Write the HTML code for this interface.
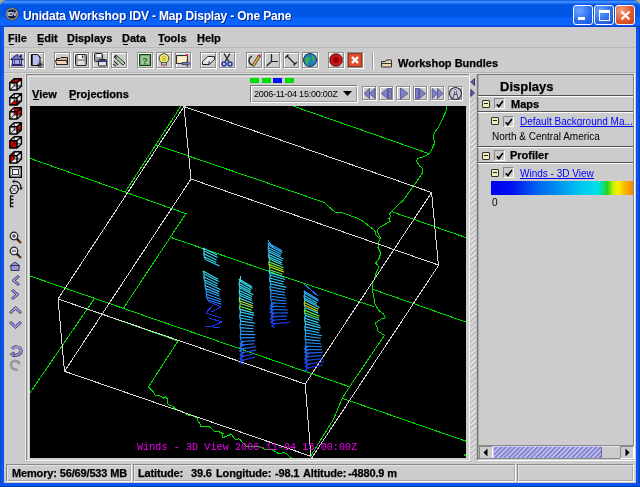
<!DOCTYPE html><html><head><meta charset="utf-8"><style>
*{margin:0;padding:0;box-sizing:content-box}
html,body{width:640px;height:487px;overflow:hidden;background:#b8a878;font-family:'Liberation Sans', sans-serif}
.a{position:absolute}
.t{position:absolute;white-space:nowrap;line-height:1;will-change:transform}
.tb{position:absolute;border:1px solid #8e8e8e;border-right-color:#fff;border-bottom-color:#fff;box-shadow:inset -1px -1px 0 #8e8e8e, inset 1px 1px 0 #fff}
svg{position:absolute;overflow:visible}
</style></head><body><div class="a" style="left:0;top:0;width:640px;height:27px;border-radius:6px 6px 0 0;background:linear-gradient(#0b4fde 0px,#2f7dff 1px,#4b95ff 2px,#2a78f6 3px,#1262ee 4px,#0056e6 5px,#0055e4 16px,#0a62f8 18px,#0c67ff 25px,#0b3fd0 26px,#0b3fd0 27px)"></div>
<div class="a" style="left:0;top:27px;width:4px;height:460px;background:linear-gradient(90deg,#0842c8,#0a5cf5 2px,#0a50e4 4px)"></div>
<div class="a" style="left:636px;top:27px;width:4px;height:460px;background:linear-gradient(90deg,#0a50e4,#0a5cf5 2px,#0030b8 4px)"></div>
<div class="a" style="left:0;top:483px;width:640px;height:4px;background:linear-gradient(#0a50e4,#0a5cf5 2px,#0030b8 4px)"></div>
<div class="a" style="left:4px;top:27px;width:632px;height:456px;background:#cccccc"></div>
<svg style="left:5px;top:7px" width="14" height="14" viewBox="0 0 14 14"><circle cx="7" cy="7" r="6.6" fill="#4a4a3a"/><circle cx="7" cy="7" r="5.8" fill="#b8b088"/><circle cx="7" cy="7" r="4.8" fill="#101c50"/>
<text x="7" y="9.2" font-family="Liberation Sans" font-size="5.5" font-weight="bold" fill="#fff" text-anchor="middle">IDV</text></svg>
<div class="t" style="left:24px;top:10px;font:bold 12px 'Liberation Sans', sans-serif;letter-spacing:-0.17px;color:#0a2a8e">Unidata Workshop IDV - Map Display - One Pane</div>
<div class="t" style="left:23px;top:9px;font:bold 12px 'Liberation Sans', sans-serif;letter-spacing:-0.17px;color:#fff">Unidata Workshop IDV - Map Display - One Pane</div>
<div class="a" style="left:573px;top:5px;width:18px;height:18px;border:1px solid #fff;border-radius:3px;background:radial-gradient(circle at 30% 25%,#6aa6ff,#2e6ff0 55%,#1a50d8)"><div class="a" style="left:4px;top:11px;width:7px;height:3px;background:#fff"></div></div>
<div class="a" style="left:594px;top:5px;width:18px;height:18px;border:1px solid #fff;border-radius:3px;background:radial-gradient(circle at 30% 25%,#6aa6ff,#2e6ff0 55%,#1a50d8)"><div class="a" style="left:4px;top:4px;width:9px;height:7px;border:1px solid #fff;border-top-width:3px"></div></div>
<div class="a" style="left:615px;top:5px;width:18px;height:18px;border:1px solid #fff;border-radius:3px;background:radial-gradient(circle at 30% 25%,#f4a080,#e2582c 55%,#c8401a)"><svg style="left:3.5px;top:4px" width="11" height="11"><path d="M1.5 1.5L9.5 9.5M9.5 1.5L1.5 9.5" stroke="#fff" stroke-width="2.2"/></svg></div>
<div class="t" style="left:8px;top:32.06px;font:bold 11px 'Liberation Sans', sans-serif;color:#000;-webkit-text-stroke:0.25px #000;">File</div>
<div class="a" style="left:9px;top:44px;width:5px;height:1px;background:#000"></div>
<div class="t" style="left:37px;top:32.06px;font:bold 11px 'Liberation Sans', sans-serif;color:#000;-webkit-text-stroke:0.25px #000;">Edit</div>
<div class="a" style="left:38px;top:44px;width:5px;height:1px;background:#000"></div>
<div class="t" style="left:67px;top:32.06px;font:bold 11px 'Liberation Sans', sans-serif;color:#000;-webkit-text-stroke:0.25px #000;">Displays</div>
<div class="a" style="left:68px;top:44px;width:5px;height:1px;background:#000"></div>
<div class="t" style="left:122px;top:32.06px;font:bold 11px 'Liberation Sans', sans-serif;color:#000;-webkit-text-stroke:0.25px #000;">Data</div>
<div class="a" style="left:123px;top:44px;width:5px;height:1px;background:#000"></div>
<div class="t" style="left:158px;top:32.06px;font:bold 11px 'Liberation Sans', sans-serif;color:#000;-webkit-text-stroke:0.25px #000;">Tools</div>
<div class="a" style="left:159px;top:44px;width:5px;height:1px;background:#000"></div>
<div class="t" style="left:197px;top:32.06px;font:bold 11px 'Liberation Sans', sans-serif;color:#000;-webkit-text-stroke:0.25px #000;">Help</div>
<div class="a" style="left:198px;top:44px;width:5px;height:1px;background:#000"></div>
<div class="a" style="left:4px;top:47px;width:632px;height:1px;background:#b8b8b8"></div>
<div class="tb" style="left:9px;top:52px;width:15px;height:15px"></div>
<div class="tb" style="left:28px;top:52px;width:15px;height:15px"></div>
<div class="tb" style="left:54px;top:52px;width:15px;height:15px"></div>
<div class="tb" style="left:73px;top:52px;width:15px;height:15px"></div>
<div class="tb" style="left:92px;top:52px;width:15px;height:15px"></div>
<div class="tb" style="left:111px;top:52px;width:15px;height:15px"></div>
<div class="tb" style="left:137px;top:52px;width:15px;height:15px"></div>
<div class="tb" style="left:156px;top:52px;width:15px;height:15px"></div>
<div class="tb" style="left:175px;top:52px;width:15px;height:15px"></div>
<div class="tb" style="left:200px;top:52px;width:15px;height:15px"></div>
<div class="tb" style="left:219px;top:52px;width:15px;height:15px"></div>
<div class="tb" style="left:246px;top:52px;width:15px;height:15px"></div>
<div class="tb" style="left:264px;top:52px;width:15px;height:15px"></div>
<div class="tb" style="left:283px;top:52px;width:15px;height:15px"></div>
<div class="tb" style="left:302px;top:52px;width:15px;height:15px"></div>
<div class="tb" style="left:328px;top:52px;width:15px;height:15px"></div>
<div class="tb" style="left:347px;top:52px;width:15px;height:15px"></div>
<svg style="left:9px;top:52px" width="16" height="16" viewBox="0 0 16 16"><path d="M1.5 7.5L8 2.5L14.5 7.5Z" fill="#7070b8" stroke="#2a2a70"/><rect x="11" y="2.5" width="2" height="3" fill="#2a2a70"/><rect x="3.5" y="7.5" width="9" height="5" fill="#a8a8e0" stroke="#2a2a70"/><path d="M5.5 8v4M10.5 8v4" stroke="#5050a0"/><path d="M2 13.5h12" stroke="#2a2a70" stroke-width="1.2"/></svg>
<svg style="left:28px;top:52px" width="16" height="16" viewBox="0 0 16 16"><path d="M3.5 2.5H9.5L12 5V13.5H3.5Z" fill="#b8c0f0" stroke="#111"/><path d="M4 3v10" stroke="#000" stroke-width="1.3"/><path d="M9.5 2.5L12.5 6" stroke="#111"/><path d="M10 10.5l4.5 4.5M14.5 10.5L10 15M12.2 9.5v6.5M9 12.7h6.5" stroke="#222" stroke-width=".8"/></svg>
<svg style="left:54px;top:52px" width="16" height="16" viewBox="0 0 16 16"><path d="M2.5 6.5H6L7 5.5H13.5V12.5H2.5Z" fill="#d8b890" stroke="#222"/><path d="M1.5 8.5H12.5L13.5 12.5H2.5Z" fill="#f0d8c0" stroke="#222"/></svg>
<svg style="left:73px;top:52px" width="16" height="16" viewBox="0 0 16 16"><rect x="2.5" y="2.5" width="11" height="11" rx="1" fill="#9a9a9a" stroke="#222"/><rect x="5" y="3" width="6" height="4" fill="#f0f0f0"/><rect x="9" y="3.5" width="1.3" height="2.5" fill="#222"/><rect x="4.5" y="9" width="7" height="4" fill="#e0e0e0"/></svg>
<svg style="left:92px;top:52px" width="16" height="16" viewBox="0 0 16 16"><rect x="2.5" y="1.5" width="8" height="8" rx="1" fill="#9a9a9a" stroke="#222"/><rect x="4.5" y="2" width="4.5" height="3" fill="#f0f0f0"/><rect x="6.5" y="7.5" width="8" height="6.5" rx="1" fill="#e0e0e0" stroke="#222"/><rect x="7" y="8" width="7" height="2" fill="#2a3a90"/></svg>
<svg style="left:111px;top:52px" width="16" height="16" viewBox="0 0 16 16"><path d="M5 3L14 11L12 13L3 5Z" fill="#a8d0a8" stroke="#333"/><path d="M3 9l4 4M2 12l3 2" stroke="#333" stroke-width="1.1"/><path d="M5 3l-2 2l3 1z" fill="#333"/></svg>
<svg style="left:137px;top:52px" width="16" height="16" viewBox="0 0 16 16"><rect x="2.5" y="2.5" width="11" height="11" fill="#70a870" stroke="#1a3a1a"/><rect x="4" y="4" width="8" height="8" fill="#98c898"/><text x="8" y="11.5" font-family="Liberation Sans" font-size="8.5" font-weight="bold" fill="#2a5a2a" text-anchor="middle">?</text></svg>
<svg style="left:156px;top:52px" width="16" height="16" viewBox="0 0 16 16"><circle cx="8" cy="6.5" r="4.8" fill="#f0e860" stroke="#444"/><path d="M7 4v5M9 4v5" stroke="#a09020" stroke-width=".7"/><rect x="5.5" y="10.5" width="5" height="2.5" fill="#c0c0c0" stroke="#444" stroke-width=".8"/><rect x="6.5" y="13" width="3" height="1.5" fill="#e07070"/></svg>
<svg style="left:175px;top:52px" width="16" height="16" viewBox="0 0 16 16"><rect x="1.5" y="3.5" width="11" height="8" fill="#f0e0b0" stroke="#333"/><rect x="3" y="5" width="8" height="5" fill="#fff0c8"/><path d="M7 10.5h5v-2l3 3l-3 3v-2h-5z" fill="#7080d0" stroke="#223" stroke-width=".7"/><rect x="11" y="2" width="2" height="2" fill="#e02020"/></svg>
<svg style="left:200px;top:52px" width="16" height="16" viewBox="0 0 16 16"><path d="M2.5 9.5L8 4.5H14.5L9 9.5Z" fill="#fff" stroke="#222"/><path d="M2.5 9.5V12.5H9L14.5 7.5V4.5M9 9.5V12.5" fill="#e0e0e0" stroke="#222"/></svg>
<svg style="left:219px;top:52px" width="16" height="16" viewBox="0 0 16 16"><path d="M5 1.5L10 10M11 1.5L6 10" stroke="#222" stroke-width="1.3"/><circle cx="5" cy="12" r="2" fill="none" stroke="#2a3ab0" stroke-width="1.6"/><circle cx="11" cy="12" r="2" fill="none" stroke="#2a3ab0" stroke-width="1.6"/></svg>
<svg style="left:246px;top:52px" width="16" height="16" viewBox="0 0 16 16"><path d="M6 13.5L12.5 3l2 1.2L8 14.5z" fill="#e8b030" stroke="#333" stroke-width=".8"/><path d="M12.5 3l2 1.2" stroke="#c03030" stroke-width="2"/><path d="M6 4c-4 2 -4 7 0 9" fill="none" stroke="#222" stroke-width="1.3"/></svg>
<svg style="left:264px;top:52px" width="16" height="16" viewBox="0 0 16 16"><path d="M7.5 2V9.5H14M7.5 9.5L2.5 14" fill="none" stroke="#222" stroke-width="1.2"/></svg>
<svg style="left:283px;top:52px" width="16" height="16" viewBox="0 0 16 16"><path d="M4 4L12 12M2 6L5.5 2.5M10.5 13.5L14 10" stroke="#222" stroke-width="1.2"/></svg>
<svg style="left:302px;top:52px" width="16" height="16" viewBox="0 0 16 16"><circle cx="8" cy="8" r="6.5" fill="#2080c0" stroke="#103050"/><path d="M3.5 6c2 -2 5 -1 4.5 1.5c-.5 2 -3 2 -2 5.5c-2 -1 -3.5 -4 -2.5 -7zM9.5 3.5c2.5 .5 4 3 3 6c-1.5 -1 -3 -3 -3 -6z" fill="#40b040"/></svg>
<svg style="left:328px;top:52px" width="16" height="16" viewBox="0 0 16 16"><path d="M5.5 2H10.5L14 5.5V10.5L10.5 14H5.5L2 10.5V5.5Z" fill="#c81818" stroke="#500"/><circle cx="8" cy="8" r="3" fill="#a00000"/></svg>
<svg style="left:347px;top:52px" width="16" height="16" viewBox="0 0 16 16"><rect x="1.5" y="1.5" width="13" height="13" fill="#e05030" stroke="#a03018"/><path d="M5 5L11 11M11 5L5 11" stroke="#fff" stroke-width="2.4"/></svg>
<div class="a" style="left:372px;top:53px;width:1px;height:17px;background:#999"></div>
<div class="a" style="left:373px;top:53px;width:1px;height:17px;background:#fff"></div>
<svg style="left:381px;top:59px" width="12" height="9" viewBox="0 0 12 9"><path d="M0.5 2.5h4l1 -1.5h5v7h-10z" fill="#e8d8a8" stroke="#333"/><path d="M0.5 4.5h10" stroke="#333"/></svg>
<div class="t" style="left:398px;top:56.66px;font:bold 11px 'Liberation Sans', sans-serif;color:#000;-webkit-text-stroke:0.25px #000;">Workshop Bundles</div>
<div class="a" style="left:4px;top:72px;width:632px;height:1px;background:#b4b4b4"></div>
<div class="a" style="left:4px;top:73px;width:632px;height:1px;background:#dcdcdc"></div>
<div class="a" style="left:25px;top:74px;width:1px;height:388px;background:#e8e8e8"></div>
<div class="a" style="left:26px;top:74px;width:1px;height:388px;background:#8a8a8a"></div>
<svg style="left:9px;top:78px" width="13" height="13" viewBox="0 0 13 13"><path d="M0.8 4.8L5.2 0.8L12.4 0.8L12.4 8L8 12L0.8 12Z" fill="#e8e8e8"/><path d="M0.8 12L8 4.8M5.2 8L12.4 0.8M0.8 4.8L12.4 8" stroke="#444" stroke-width=".6" opacity=".7"/><path d="M0.8 4.8L5.2 0.8L12.4 0.8L8 4.8Z" fill="#d00000"/><path d="M5.2 0.8V8H12.4M5.2 8L0.8 12" fill="none" stroke="#111" stroke-width=".8"/><path d="M0.8 4.8L5.2 0.8L12.4 0.8L12.4 8L8 12L0.8 12ZM0.8 4.8H8V12M8 4.8L12.4 0.8" fill="none" stroke="#000" stroke-width="1.4" stroke-linejoin="round"/></svg>
<svg style="left:9px;top:93px" width="13" height="13" viewBox="0 0 13 13"><path d="M0.8 4.8L5.2 0.8L12.4 0.8L12.4 8L8 12L0.8 12Z" fill="#e8e8e8"/><path d="M0.8 12L8 4.8M5.2 8L12.4 0.8M0.8 4.8L12.4 8" stroke="#444" stroke-width=".6" opacity=".7"/><path d="M0.8 12L5.2 8L12.4 8L8 12Z" fill="#d00000"/><path d="M5.2 0.8V8H12.4M5.2 8L0.8 12" fill="none" stroke="#111" stroke-width=".8"/><path d="M0.8 4.8L5.2 0.8L12.4 0.8L12.4 8L8 12L0.8 12ZM0.8 4.8H8V12M8 4.8L12.4 0.8" fill="none" stroke="#000" stroke-width="1.4" stroke-linejoin="round"/></svg>
<svg style="left:9px;top:107px" width="13" height="13" viewBox="0 0 13 13"><path d="M0.8 4.8L5.2 0.8L12.4 0.8L12.4 8L8 12L0.8 12Z" fill="#e8e8e8"/><path d="M0.8 12L8 4.8M5.2 8L12.4 0.8M0.8 4.8L12.4 8" stroke="#444" stroke-width=".6" opacity=".7"/><path d="M5.2 0.8L12.4 0.8L12.4 8L5.2 8Z" fill="#d00000"/><path d="M5.2 0.8V8H12.4M5.2 8L0.8 12" fill="none" stroke="#111" stroke-width=".8"/><path d="M0.8 4.8L5.2 0.8L12.4 0.8L12.4 8L8 12L0.8 12ZM0.8 4.8H8V12M8 4.8L12.4 0.8" fill="none" stroke="#000" stroke-width="1.4" stroke-linejoin="round"/></svg>
<svg style="left:9px;top:122px" width="13" height="13" viewBox="0 0 13 13"><path d="M0.8 4.8L5.2 0.8L12.4 0.8L12.4 8L8 12L0.8 12Z" fill="#e8e8e8"/><path d="M0.8 12L8 4.8M5.2 8L12.4 0.8M0.8 4.8L12.4 8" stroke="#444" stroke-width=".6" opacity=".7"/><path d="M8 4.8L12.4 0.8L12.4 8L8 12Z" fill="#d00000"/><path d="M5.2 0.8V8H12.4M5.2 8L0.8 12" fill="none" stroke="#111" stroke-width=".8"/><path d="M0.8 4.8L5.2 0.8L12.4 0.8L12.4 8L8 12L0.8 12ZM0.8 4.8H8V12M8 4.8L12.4 0.8" fill="none" stroke="#000" stroke-width="1.4" stroke-linejoin="round"/></svg>
<svg style="left:9px;top:136px" width="13" height="13" viewBox="0 0 13 13"><path d="M0.8 4.8L5.2 0.8L12.4 0.8L12.4 8L8 12L0.8 12Z" fill="#e8e8e8"/><path d="M0.8 12L8 4.8M5.2 8L12.4 0.8M0.8 4.8L12.4 8" stroke="#444" stroke-width=".6" opacity=".7"/><path d="M0.8 4.8L8 4.8L8 12L0.8 12Z" fill="#d00000"/><path d="M5.2 0.8V8H12.4M5.2 8L0.8 12" fill="none" stroke="#111" stroke-width=".8"/><path d="M0.8 4.8L5.2 0.8L12.4 0.8L12.4 8L8 12L0.8 12ZM0.8 4.8H8V12M8 4.8L12.4 0.8" fill="none" stroke="#000" stroke-width="1.4" stroke-linejoin="round"/></svg>
<svg style="left:9px;top:151px" width="13" height="13" viewBox="0 0 13 13"><path d="M0.8 4.8L5.2 0.8L12.4 0.8L12.4 8L8 12L0.8 12Z" fill="#e8e8e8"/><path d="M0.8 12L8 4.8M5.2 8L12.4 0.8M0.8 4.8L12.4 8" stroke="#444" stroke-width=".6" opacity=".7"/><path d="M0.8 4.8L5.2 0.8L5.2 8L0.8 12Z" fill="#d00000"/><path d="M5.2 0.8V8H12.4M5.2 8L0.8 12" fill="none" stroke="#111" stroke-width=".8"/><path d="M0.8 4.8L5.2 0.8L12.4 0.8L12.4 8L8 12L0.8 12ZM0.8 4.8H8V12M8 4.8L12.4 0.8" fill="none" stroke="#000" stroke-width="1.4" stroke-linejoin="round"/></svg>
<svg style="left:9px;top:166px" width="13" height="12" viewBox="0 0 13 12"><rect x="0.7" y="0.7" width="11.6" height="10.6" fill="#d8d8d8" stroke="#000" stroke-width="1.4"/><rect x="3.5" y="3.5" width="6" height="5" fill="#f4f4f4" stroke="#333"/><path d="M1 1l2.5 2.5M12 1l-2.5 2.5M1 11l2.5 -2.5M12 11l-2.5 -2.5" stroke="#333" stroke-width=".8"/></svg>
<svg style="left:9px;top:180px" width="14" height="14" viewBox="0 0 14 14"><path d="M1 9.5l2.5 -4h4.5l1.5 4l-2.5 4h-4.5z" fill="#e0e0e0" stroke="#111" stroke-width="1.2"/><path d="M3 8l4 3M7 7.5l-3.5 4" stroke="#444" stroke-width=".8"/><path d="M4.5 1.5c4 -1 7.5 2 7.5 6" fill="none" stroke="#111" stroke-width="1.2"/><path d="M10 7.5h4l-2 2.5z" fill="#111"/><path d="M5.5 0l-2 1.5l2 1.5" fill="none" stroke="#111"/></svg>
<svg style="left:9px;top:195px" width="6" height="13" viewBox="0 0 6 13"><path d="M1.5 0.5v11.5M1 1h3.5M1 4.5h3.5M1 8h3.5M1 11.5h3.5" stroke="#111" stroke-width="1.3" fill="none"/></svg>
<svg style="left:9px;top:231px" width="13" height="13" viewBox="0 0 13 13"><circle cx="5" cy="5" r="3.8" fill="#e0e0f0" stroke="#222" stroke-width="1.2"/><path d="M7.5 7.5l4.5 4.5" stroke="#5a3010" stroke-width="2.2"/><path d="M8 8l1.5 1.5" stroke="#222" stroke-width="2"/><path d="M3 5h4" stroke="#333"/><path d="M5 3v4" stroke="#333"/></svg>
<svg style="left:9px;top:246px" width="13" height="13" viewBox="0 0 13 13"><circle cx="5" cy="5" r="3.8" fill="#e0e0f0" stroke="#222" stroke-width="1.2"/><path d="M7.5 7.5l4.5 4.5" stroke="#5a3010" stroke-width="2.2"/><path d="M8 8l1.5 1.5" stroke="#222" stroke-width="2"/><path d="M3 5h4" stroke="#333"/></svg>
<svg style="left:9px;top:261px" width="12" height="10" viewBox="0 0 12 10"><path d="M1 5L6 1L11 5H10V9.5H2V5Z" fill="#9898d0" stroke="#333366"/><path d="M1 4.5h10M2 9.5h8" stroke="#333366"/></svg>
<svg style="left:11px;top:275px" width="9" height="11" viewBox="0 0 9 11"><path d="M7 0.5L1 5.5L7 10.5L8.5 9L4.2 5.5L8.5 2Z" fill="#a0a0e0" stroke="#333366" stroke-width=".9" stroke-linejoin="round"/></svg>
<svg style="left:11px;top:289px" width="9" height="11" viewBox="0 0 9 11"><path d="M2 0.5L8 5.5L2 10.5L0.5 9L4.8 5.5L0.5 2Z" fill="#a0a0e0" stroke="#333366" stroke-width=".9" stroke-linejoin="round"/></svg>
<svg style="left:9px;top:306px" width="13" height="8" viewBox="0 0 13 8"><path d="M0.5 6L6.5 0.5L12.5 6L11 7.5L6.5 3.5L2 7.5Z" fill="#a0a0e0" stroke="#333366" stroke-width=".9" stroke-linejoin="round"/></svg>
<svg style="left:9px;top:321px" width="13" height="8" viewBox="0 0 13 8"><path d="M0.5 2L6.5 7.5L12.5 2L11 0.5L6.5 4.5L2 0.5Z" fill="#a0a0e0" stroke="#333366" stroke-width=".9" stroke-linejoin="round"/></svg>
<svg style="left:9px;top:345px" width="13" height="13" viewBox="0 0 13 13"><path d="M3 4c2 -3 8 -3 9 1c1 4 -4 6 -7 5" fill="none" stroke="#333366" stroke-width="3"/><path d="M3 4c2 -3 8 -3 9 1c1 4 -4 6 -7 5" fill="none" stroke="#a0a0e0" stroke-width="1.6"/><path d="M1 9l4 -2v5z" fill="#a0a0e0" stroke="#333366" stroke-width=".8"/></svg>
<svg style="left:9px;top:359px" width="13" height="13" viewBox="0 0 13 13"><path d="M10 4c-2 -3 -8 -3 -8 1.5c0 4 4 6 7 5" fill="none" stroke="#999" stroke-width="2.6"/><path d="M9 1l3 3l-3 2z" fill="#999"/></svg>
<div class="a" style="left:26px;top:74px;width:444px;height:1px;background:#8a8a8a"></div>
<div class="a" style="left:28px;top:76px;width:1px;height:384px;background:#e8e8e8"></div>
<div class="a" style="left:28px;top:76px;width:441px;height:1px;background:#e8e8e8"></div>
<div class="a" style="left:469px;top:74px;width:1px;height:387px;background:#f4f4f4"></div>
<div class="a" style="left:26px;top:460px;width:444px;height:1px;background:#f4f4f4"></div>
<div class="t" style="left:32px;top:87.76px;font:bold 11px 'Liberation Sans', sans-serif;color:#000;-webkit-text-stroke:0.25px #000;">View</div>
<div class="a" style="left:33px;top:99px;width:6px;height:1px;background:#000"></div>
<div class="t" style="left:69px;top:87.76px;font:bold 11px 'Liberation Sans', sans-serif;color:#000;-webkit-text-stroke:0.25px #000;">Projections</div>
<div class="a" style="left:70px;top:99px;width:6px;height:1px;background:#000"></div>
<div class="a" style="left:250px;top:78px;width:9px;height:5px;background:#00e000"></div>
<div class="a" style="left:262px;top:78px;width:9px;height:5px;background:#00e000"></div>
<div class="a" style="left:273px;top:78px;width:9px;height:5px;background:#0010ff"></div>
<div class="a" style="left:285px;top:78px;width:9px;height:5px;background:#00e000"></div>
<div class="a" style="left:250px;top:85px;width:106px;height:16px;border:1px solid #777;border-right-color:#fff;border-bottom-color:#fff;box-shadow:inset 1px 1px 0 #fff, inset -1px -1px 0 #999"></div>
<div class="t" style="left:254px;top:88.5px;font:9px 'Liberation Sans', sans-serif;letter-spacing:-0.25px;color:#000">2006-11-04 15:00:00Z</div>
<svg style="left:343px;top:91px" width="10" height="6" viewBox="0 0 10 6"><path d="M0 0h9l-4.5 5z" fill="#000"/></svg>
<div class="tb" style="left:362px;top:86px;width:13px;height:13px"></div>
<div class="tb" style="left:379px;top:86px;width:13px;height:13px"></div>
<div class="tb" style="left:396px;top:86px;width:13px;height:13px"></div>
<div class="tb" style="left:413px;top:86px;width:13px;height:13px"></div>
<div class="tb" style="left:430px;top:86px;width:13px;height:13px"></div>
<div class="tb" style="left:448px;top:86px;width:13px;height:13px"></div>
<svg style="left:362px;top:86px" width="15" height="15" viewBox="0 0 15 15"><path d="M7.5 2.5L2 7.5L7.5 12.5Z" fill="#8080c8" stroke="#4a4a88" stroke-width=".8" stroke-linejoin="round"/><path d="M13 2.5L7.5 7.5L13 12.5Z" fill="#8080c8" stroke="#4a4a88" stroke-width=".8" stroke-linejoin="round"/></svg>
<svg style="left:379px;top:86px" width="15" height="15" viewBox="0 0 15 15"><path d="M8.5 2.5L2.5 7.5L8.5 12.5Z" fill="#8080c8" stroke="#4a4a88" stroke-width=".8" stroke-linejoin="round"/><rect x="9.5" y="2.5" width="3" height="10" fill="#8080c8" stroke="#4a4a88" stroke-width=".8" stroke-linejoin="round"/></svg>
<svg style="left:396px;top:86px" width="15" height="15" viewBox="0 0 15 15"><path d="M4.5 2L12 7.5L4.5 13Z" fill="#8080c8" stroke="#4a4a88" stroke-width=".8" stroke-linejoin="round"/></svg>
<svg style="left:413px;top:86px" width="15" height="15" viewBox="0 0 15 15"><rect x="2.5" y="2.5" width="3" height="10" fill="#8080c8" stroke="#4a4a88" stroke-width=".8" stroke-linejoin="round"/><path d="M6.5 2.5L12.5 7.5L6.5 12.5Z" fill="#8080c8" stroke="#4a4a88" stroke-width=".8" stroke-linejoin="round"/></svg>
<svg style="left:430px;top:86px" width="15" height="15" viewBox="0 0 15 15"><path d="M2 2.5L7.5 7.5L2 12.5Z" fill="#8080c8" stroke="#4a4a88" stroke-width=".8" stroke-linejoin="round"/><path d="M7.5 2.5L13 7.5L7.5 12.5Z" fill="#8080c8" stroke="#4a4a88" stroke-width=".8" stroke-linejoin="round"/></svg>
<svg style="left:448px;top:86px" width="15" height="15" viewBox="0 0 15 15"><circle cx="7.5" cy="7.5" r="6" fill="#c8c8e0" stroke="#333" stroke-width="1.2"/><path d="M7.5 3.5L5 12M7.5 3.5L10 12M6 8.5h3" stroke="#555" stroke-width="1" fill="none"/><circle cx="7.5" cy="5" r="1.2" fill="#fff" stroke="#555" stroke-width=".6"/></svg>
<div class="a" style="left:30px;top:106px;width:436px;height:352px;background:#000"></div>
<div class="a" style="left:476px;top:74px;width:1px;height:388px;background:#bbb"></div>
<svg style="left:470px;top:78px" width="6" height="8" viewBox="0 0 6 8"><path d="M4.5 0.5L0.8 4L4.5 7.5Z" fill="#6060b0" stroke="#202050" stroke-width=".8"/></svg>
<svg style="left:470px;top:89px" width="6" height="8" viewBox="0 0 6 8"><path d="M0.8 0.5L4.5 4L0.8 7.5Z" fill="#6060b0" stroke="#202050" stroke-width=".8"/></svg>
<div class="a" style="left:471px;top:99px;width:5px;height:358px;background:repeating-linear-gradient(135deg,#e6e6e6 0px,#e6e6e6 1px,#b8b8b8 1.6px,#b8b8b8 2.2px,#cccccc 2.6px,#cccccc 3.6px)"></div>
<div class="a" style="left:477px;top:74px;width:1px;height:386px;background:#777"></div>
<div class="a" style="left:478px;top:75px;width:1px;height:385px;background:#aaa"></div>
<div class="a" style="left:477px;top:74px;width:157px;height:1px;background:#777"></div>
<div class="a" style="left:633px;top:74px;width:1px;height:386px;background:#888"></div>
<div class="a" style="left:634px;top:74px;width:1px;height:387px;background:#fff"></div>
<div class="a" style="left:477px;top:460px;width:158px;height:1px;background:#fff"></div>
<div class="t" style="left:500px;top:79.11px;font:bold 13px 'Liberation Sans', sans-serif;color:#000;-webkit-text-stroke:0.25px #000;">Displays</div>
<div class="a" style="left:478px;top:95px;width:155px;height:1px;background:#555"></div>
<div class="a" style="left:478px;top:96px;width:155px;height:1px;background:#fff"></div>
<div class="a" style="left:482px;top:100px;width:6px;height:6px;border:1px solid #333;border-radius:1px;background:#f0ecb8"></div>
<div class="a" style="left:484px;top:103px;width:4px;height:1px;background:#222"></div>
<div class="a" style="left:494px;top:98px;width:9px;height:9px;border:1px solid #888;border-right-color:#fff;border-bottom-color:#fff;background:#cccccc"></div>
<svg style="left:496px;top:100px" width="8" height="8" viewBox="0 0 8 8"><path d="M0.8 4.2L2.8 6.6L7 1" fill="none" stroke="#000" stroke-width="1.6"/></svg>
<div class="t" style="left:510.5px;top:98.46px;font:bold 11px 'Liberation Sans', sans-serif;color:#000;-webkit-text-stroke:0.25px #000;">Maps</div>
<div class="a" style="left:478px;top:111px;width:155px;height:1px;background:#555"></div>
<div class="a" style="left:478px;top:112px;width:155px;height:1px;background:#fff"></div>
<div class="a" style="left:491px;top:117px;width:6px;height:6px;border:1px solid #333;border-radius:1px;background:#f0ecb8"></div>
<div class="a" style="left:493px;top:120px;width:4px;height:1px;background:#222"></div>
<div class="a" style="left:503px;top:116px;width:9px;height:9px;border:1px solid #888;border-right-color:#fff;border-bottom-color:#fff;background:#cccccc"></div>
<svg style="left:505px;top:118px" width="8" height="8" viewBox="0 0 8 8"><path d="M0.8 4.2L2.8 6.6L7 1" fill="none" stroke="#000" stroke-width="1.6"/></svg>
<div class="t" style="left:520px;top:116.44px;font:10px 'Liberation Sans', sans-serif;color:#0000ff;">Default Background Ma...</div>
<div class="a" style="left:520px;top:126px;width:113px;height:1px;background:#0000ff"></div>
<div class="t" style="left:492px;top:131.24px;font:10px 'Liberation Sans', sans-serif;color:#000;">North &amp; Central America</div>
<div class="a" style="left:478px;top:146px;width:155px;height:1px;background:#555"></div>
<div class="a" style="left:478px;top:147px;width:155px;height:1px;background:#fff"></div>
<div class="a" style="left:482px;top:152px;width:6px;height:6px;border:1px solid #333;border-radius:1px;background:#f0ecb8"></div>
<div class="a" style="left:484px;top:155px;width:4px;height:1px;background:#222"></div>
<div class="a" style="left:494px;top:150px;width:9px;height:9px;border:1px solid #888;border-right-color:#fff;border-bottom-color:#fff;background:#cccccc"></div>
<svg style="left:496px;top:152px" width="8" height="8" viewBox="0 0 8 8"><path d="M0.8 4.2L2.8 6.6L7 1" fill="none" stroke="#000" stroke-width="1.6"/></svg>
<div class="t" style="left:510.2px;top:149.26px;font:bold 11px 'Liberation Sans', sans-serif;color:#000;-webkit-text-stroke:0.25px #000;">Profiler</div>
<div class="a" style="left:478px;top:162px;width:155px;height:1px;background:#555"></div>
<div class="a" style="left:478px;top:163px;width:155px;height:1px;background:#fff"></div>
<div class="a" style="left:491px;top:169px;width:6px;height:6px;border:1px solid #333;border-radius:1px;background:#f0ecb8"></div>
<div class="a" style="left:493px;top:172px;width:4px;height:1px;background:#222"></div>
<div class="a" style="left:503px;top:167px;width:9px;height:9px;border:1px solid #888;border-right-color:#fff;border-bottom-color:#fff;background:#cccccc"></div>
<svg style="left:505px;top:169px" width="8" height="8" viewBox="0 0 8 8"><path d="M0.8 4.2L2.8 6.6L7 1" fill="none" stroke="#000" stroke-width="1.6"/></svg>
<div class="t" style="left:520px;top:167.74px;font:10px 'Liberation Sans', sans-serif;color:#0000ff;">Winds - 3D View</div>
<div class="a" style="left:520px;top:177.5px;width:74px;height:1px;background:#0000ff"></div>
<div class="a" style="left:491px;top:181px;width:142px;height:14px;background:linear-gradient(90deg,#0000f0 0px,#0010f0 20px,#0060f0 45px,#0098f0 70px,#00c8f0 90px,#00e0e8 106px,#10e080 113px,#20d020 116px,#c0f000 122px,#f8f000 127px,#f8c000 133px,#f89000 140px)"></div>
<div class="t" style="left:491.5px;top:196.74px;font:10px 'Liberation Sans', sans-serif;color:#000;">0</div>
<div class="a" style="left:479px;top:446px;width:12px;height:11px;border:1px solid #888;border-right-color:#fff;border-bottom-color:#fff;background:#ccc"></div>
<svg style="left:483px;top:448px" width="5" height="9" viewBox="0 0 5 9"><path d="M4.5 0.5L0.5 4.5L4.5 8.5Z" fill="#000"/></svg>
<div class="a" style="left:493px;top:446px;width:107px;height:11px;border:1px solid #6868a8;border-top-color:#c8c8f8;border-left-color:#c8c8f8;background:repeating-linear-gradient(135deg,#c0c0f4 0px,#c0c0f4 1px,#8080c8 1.5px,#8080c8 2.2px,#9c9cdc 2.6px,#9c9cdc 3.2px)"></div>
<div class="a" style="left:478px;top:445px;width:155px;height:1px;background:#8a8a8a"></div>
<div class="a" style="left:478px;top:458px;width:155px;height:1px;background:#8a8a8a"></div>
<div class="a" style="left:601px;top:446px;width:19px;height:1px;background:#e8e8e8"></div>
<div class="a" style="left:620px;top:446px;width:12px;height:11px;border:1px solid #888;border-right-color:#fff;border-bottom-color:#fff;background:#ccc"></div>
<svg style="left:625px;top:448px" width="5" height="9" viewBox="0 0 5 9"><path d="M0.5 0.5L4.5 4.5L0.5 8.5Z" fill="#000"/></svg>
<div class="a" style="left:6px;top:464px;width:124px;height:16px;border:1px solid #8a8a8a;border-right-color:#fff;border-bottom-color:#fff;box-shadow:inset 1px 1px 0 #e4e4e4, inset -1px -1px 0 #a8a8a8"></div>
<div class="a" style="left:133px;top:464px;width:381px;height:16px;border:1px solid #8a8a8a;border-right-color:#fff;border-bottom-color:#fff;box-shadow:inset 1px 1px 0 #e4e4e4, inset -1px -1px 0 #a8a8a8"></div>
<div class="a" style="left:517px;top:464px;width:115px;height:16px;border:1px solid #8a8a8a;border-right-color:#fff;border-bottom-color:#fff;box-shadow:inset 1px 1px 0 #e4e4e4, inset -1px -1px 0 #a8a8a8"></div>
<div class="t" style="left:12px;top:467.06px;font:bold 11px 'Liberation Sans', sans-serif;color:#000;-webkit-text-stroke:0.25px #000;letter-spacing:-0.15px">Memory: 56/69/533 MB</div>
<div class="t" style="left:138px;top:467.06px;font:bold 11px 'Liberation Sans', sans-serif;color:#000;-webkit-text-stroke:0.25px #000;letter-spacing:-0.15px">Latitude:</div>
<div class="t" style="left:191px;top:467.06px;font:bold 11px 'Liberation Sans', sans-serif;color:#000;-webkit-text-stroke:0.25px #000;letter-spacing:-0.15px">39.6</div>
<div class="t" style="left:215.5px;top:467.06px;font:bold 11px 'Liberation Sans', sans-serif;color:#000;-webkit-text-stroke:0.25px #000;letter-spacing:-0.15px">Longitude:</div>
<div class="t" style="left:274.5px;top:467.06px;font:bold 11px 'Liberation Sans', sans-serif;color:#000;-webkit-text-stroke:0.25px #000;letter-spacing:-0.15px">-98.1</div>
<div class="t" style="left:302.5px;top:467.06px;font:bold 11px 'Liberation Sans', sans-serif;color:#000;-webkit-text-stroke:0.25px #000;letter-spacing:-0.15px">Altitude:</div>
<div class="t" style="left:347.5px;top:467.06px;font:bold 11px 'Liberation Sans', sans-serif;color:#000;-webkit-text-stroke:0.25px #000;letter-spacing:-0.15px">-4880.9 m</div>
<svg style="left:0;top:0" width="640" height="487"><defs><clipPath id="cv"><rect x="30" y="106" width="436" height="352"/></clipPath></defs><g clip-path="url(#cv)" stroke-linecap="round" shape-rendering="crispEdges"><polyline points="293.0,106.0 429.5,153.8" fill="none" stroke="#00dc00" stroke-width="1"/><polyline points="30.0,158.4 185.9,213.6 123.5,308.2" fill="none" stroke="#00dc00" stroke-width="1"/><polyline points="181.0,106.0 125.5,191.5" fill="none" stroke="#00dc00" stroke-width="1"/><polyline points="155.8,144.8 324.2,202.4 335.5,212.6 342.3,212.6 360.3,219.4 374.8,230.4 375.6,234.5 379.7,238.6" fill="none" stroke="#00dc00" stroke-width="1"/><polyline points="30.0,276.0 349.6,386.8" fill="none" stroke="#00dc00" stroke-width="1"/><polyline points="94.4,298.5 30.0,392.8" fill="none" stroke="#00dc00" stroke-width="1"/><polyline points="170.2,237.2 293.7,280.0 373.9,306.6" fill="none" stroke="#00dc00" stroke-width="1"/><polyline points="85.0,308.3 178.0,341.0 148.5,386.9 153.8,392.5 155.0,395.2 158.8,395.2 163.8,398.1 165.6,396.9 168.1,400.0 166.9,403.1 169.4,405.6 173.1,406.2 175.0,408.8 181.2,411.2 185.0,413.1 187.5,415.0 191.9,415.6 197.5,418.1 197.5,420.6 200.0,423.8 200.6,426.9 205.0,426.9 208.1,426.2 211.2,428.1 214.4,431.2 219.4,431.9 223.1,433.8 221.9,436.9 223.1,438.1 225.6,436.2 228.8,435.6 230.6,433.8 232.5,435.6 234.4,438.8 236.2,439.4 238.8,438.8 240.6,440.0 243.1,443.1 246.2,446.2 258.8,446.2 261.9,448.1 264.4,449.4 271.2,449.4 273.8,450.6 277.5,453.1 281.2,453.1 283.8,452.5 287.5,454.4 290.0,456.9 291.9,457.5" fill="none" stroke="#00dc00" stroke-width="1"/><polyline points="446.4,106.0 446.0,111.3 438.8,126.7 435.7,130.8 433.2,135.9 434.7,143.1 429.5,153.8 424.4,156.5 417.2,158.5 416.8,161.6 419.3,165.7 423.0,168.8 422.4,172.9 416.2,182.1 403.5,200.0 391.2,211.5 389.6,214.0 390.4,216.4 388.7,218.9 390.4,221.3 381.3,226.3 378.0,228.7 377.7,232.0 380.5,237.8 378.9,241.0 378.0,247.6 380.5,252.5 379.7,257.5 375.6,263.2 378.0,265.7 378.9,267.3 376.4,272.2 374.0,280.0 372.0,284.5 372.0,289.0 373.7,296.4 375.1,304.6 379.2,310.8 383.3,313.9 385.4,318.0 381.3,319.0 375.1,323.1 377.2,327.2 378.2,331.3 384.4,335.4 349.6,386.8 342.2,398.3 333.1,420.0 310.0,457.2" fill="none" stroke="#00dc00" stroke-width="1"/><polyline points="342.2,398.3 466.0,441.2" fill="none" stroke="#00dc00" stroke-width="1"/><polyline points="391.6,211.6 466.0,237.6" fill="none" stroke="#00dc00" stroke-width="1"/><polyline points="372.0,289.0 466.0,322.1" fill="none" stroke="#00dc00" stroke-width="1"/><polyline points="184.0,106.5 191.0,179.0" fill="none" stroke="#d8d8d8" stroke-width="1"/><polyline points="184.0,106.5 58.0,299.0" fill="none" stroke="#d8d8d8" stroke-width="1"/><polyline points="184.0,106.5 431.6,192.5" fill="none" stroke="#d8d8d8" stroke-width="1"/><polyline points="191.0,179.0 64.5,371.3" fill="none" stroke="#d8d8d8" stroke-width="1"/><polyline points="191.0,179.0 438.4,265.0" fill="none" stroke="#d8d8d8" stroke-width="1"/><polyline points="58.0,299.0 64.5,371.3" fill="none" stroke="#d8d8d8" stroke-width="1"/><polyline points="58.0,299.0 305.2,384.0" fill="none" stroke="#d8d8d8" stroke-width="1"/><polyline points="64.5,371.3 310.9,456.3" fill="none" stroke="#d8d8d8" stroke-width="1"/><polyline points="431.6,192.5 438.4,265.0" fill="none" stroke="#d8d8d8" stroke-width="1"/><polyline points="431.6,192.5 305.2,384.0" fill="none" stroke="#d8d8d8" stroke-width="1"/><polyline points="305.2,384.0 310.9,456.3" fill="none" stroke="#d8d8d8" stroke-width="1"/><polyline points="438.8,265.0 312.0,457.5" fill="none" stroke="#d8d8d8" stroke-width="1"/><polyline points="268.5,241.0 273.0,248.0" fill="none" stroke="#30a8ff" stroke-width="1"/><polyline points="240.5,277.0 241.0,282.0" fill="none" stroke="#38e0f8" stroke-width="1"/><polyline points="304.0,284.0 318.0,296.0" fill="none" stroke="#2080f8" stroke-width="1"/><polyline points="208.0,301.0 221.0,307.0 211.0,312.0" fill="none" stroke="#2038f0" stroke-width="1"/><polyline points="213.0,305.0 206.0,313.0 221.0,318.0" fill="none" stroke="#2038f0" stroke-width="1"/><polyline points="209.0,318.0 222.0,322.0 210.0,327.0" fill="none" stroke="#2038f0" stroke-width="1"/><polyline points="205.0,326.0 220.0,328.0" fill="none" stroke="#2038f0" stroke-width="1"/><rect x="464" y="454" width="2" height="2" fill="#00c800"/></g><g stroke-width="1.15" fill="none"><path d="M203.0 248.0l14.0 7.0" stroke="#38e0f8"/><path d="M204.2 250.9l13.4 6.6" stroke="#38e0f8"/><path d="M203.0 248.0L204.2 250.9" stroke="#38e0f8"/><path d="M203.8 253.8l12.8 6.1" stroke="#38e0f8"/><path d="M204.2 250.9L203.8 253.8" stroke="#38e0f8"/><path d="M204.2 256.7l12.2 5.7" stroke="#38e0f8"/><path d="M203.8 253.8L204.2 256.7" stroke="#38e0f8"/><path d="M205.5 259.6l14.0 6.4" stroke="#38e0f8"/><path d="M204.2 256.7L205.5 259.6" stroke="#38e0f8"/><path d="M203.0 271.0l15.0 8.2" stroke="#38e0f8"/><path d="M204.2 273.9l14.4 7.6" stroke="#38d9f8"/><path d="M203.0 271.0L204.2 273.9" stroke="#38d9f8"/><path d="M203.8 276.8l13.8 6.9" stroke="#38d2f8"/><path d="M204.2 273.9L203.8 276.8" stroke="#38d2f8"/><path d="M204.2 279.7l13.2 6.3" stroke="#38ccf8"/><path d="M203.8 276.8L204.2 279.7" stroke="#38ccf8"/><path d="M205.4 282.6l15.0 6.8" stroke="#38c5f8"/><path d="M204.2 279.7L205.4 282.6" stroke="#38c5f8"/><path d="M205.0 285.5l14.4 6.1" stroke="#37bdf8"/><path d="M205.4 282.6L205.0 285.5" stroke="#37bdf8"/><path d="M205.4 288.4l13.8 5.5" stroke="#32b1f8"/><path d="M205.0 285.5L205.4 288.4" stroke="#32b1f8"/><path d="M206.6 291.3l13.2 5.0" stroke="#2da5f8"/><path d="M205.4 288.4L206.6 291.3" stroke="#2da5f8"/><path d="M206.2 294.2l15.0 5.3" stroke="#2998f8"/><path d="M206.6 291.3L206.2 294.2" stroke="#2998f8"/><path d="M206.6 297.1l14.4 4.7" stroke="#248cf8"/><path d="M206.2 294.2L206.6 297.1" stroke="#248cf8"/><path d="M207.8 300.0l13.8 4.1" stroke="#2080f8"/><path d="M206.6 297.1L207.8 300.0" stroke="#2080f8"/><path d="M239.0 279.0l13.0 7.8" stroke="#38e0f8"/><path d="M239.9 281.2l12.5 7.2" stroke="#38e0f8"/><path d="M239.0 279.0L239.9 281.2" stroke="#38e0f8"/><path d="M239.1 283.5l12.0 6.6" stroke="#38e0f8"/><path d="M239.9 281.2L239.1 283.5" stroke="#38e0f8"/><path d="M239.2 285.8l11.4 6.0" stroke="#38e0f8"/><path d="M239.1 283.5L239.2 285.8" stroke="#38e0f8"/><path d="M240.0 288.1l13.3 6.7" stroke="#38e0f8"/><path d="M239.2 285.8L240.0 288.1" stroke="#38e0f8"/><path d="M239.3 290.5l12.8 6.1" stroke="#38e0f8"/><path d="M240.0 288.1L239.3 290.5" stroke="#38e0f8"/><path d="M239.3 293.0l12.3 5.6" stroke="#38e0f8"/><path d="M239.3 290.5L239.3 293.0" stroke="#38e0f8"/><path d="M240.2 295.5l11.8 5.0" stroke="#38e0f8"/><path d="M239.3 293.0L240.2 295.5" stroke="#38e0f8"/><path d="M239.4 298.1l13.7 5.4" stroke="#38e0f8"/><path d="M240.2 295.5L239.4 298.1" stroke="#38e0f8"/><path d="M239.5 300.8l13.2 4.9" stroke="#c5ec39"/><path d="M239.4 298.1L239.5 300.8" stroke="#c5ec39"/><path d="M240.4 303.5l12.7 4.3" stroke="#97e877"/><path d="M239.5 300.8L240.4 303.5" stroke="#97e877"/><path d="M239.6 306.3l12.2 3.8" stroke="#70f030"/><path d="M240.4 303.5L239.6 306.3" stroke="#70f030"/><path d="M239.7 309.1l14.1 4.0" stroke="#37dff8"/><path d="M239.6 306.3L239.7 309.1" stroke="#37dff8"/><path d="M240.6 312.0l13.6 3.4" stroke="#36d7f9"/><path d="M239.7 309.1L240.6 312.0" stroke="#36d7f9"/><path d="M239.8 315.0l13.1 2.9" stroke="#35d0f9"/><path d="M240.6 312.0L239.8 315.0" stroke="#35d0f9"/><path d="M239.9 318.0l12.6 2.3" stroke="#34c7fb"/><path d="M239.8 315.0L239.9 318.0" stroke="#34c7fb"/><path d="M240.8 321.1l14.5 2.2" stroke="#33bffc"/><path d="M239.9 318.0L240.8 321.1" stroke="#33bffc"/><path d="M240.1 324.3l14.0 1.7" stroke="#32b7fd"/><path d="M240.8 321.1L240.1 324.3" stroke="#32b7fd"/><path d="M240.1 327.6l13.5 1.2" stroke="#30aefe"/><path d="M240.1 324.3L240.1 327.6" stroke="#30aefe"/><path d="M241.0 331.0l13.0 0.7" stroke="#2ea4fe"/><path d="M240.1 327.6L241.0 331.0" stroke="#2ea4fe"/><path d="M240.3 334.4l15.0 0.2" stroke="#2996fb"/><path d="M241.0 331.0L240.3 334.4" stroke="#2996fb"/><path d="M240.4 337.9l14.5 -0.3" stroke="#2388f9"/><path d="M240.3 334.4L240.4 337.9" stroke="#2388f9"/><path d="M241.3 341.5l14.0 -0.9" stroke="#207bf7"/><path d="M240.4 337.9L241.3 341.5" stroke="#207bf7"/><path d="M244.3 341.3l-4 2.5l3 1.5" stroke="#207bf7" fill="none"/><path d="M240.6 345.1l13.5 -1.4" stroke="#2071f6"/><path d="M241.3 341.5L240.6 345.1" stroke="#2071f6"/><path d="M243.6 344.9l-4 2.5l3 1.5" stroke="#2071f6" fill="none"/><path d="M240.6 348.9l15.5 -2.2" stroke="#2067f5"/><path d="M240.6 345.1L240.6 348.9" stroke="#2067f5"/><path d="M243.6 348.5l-4 2.5l3 1.5" stroke="#2067f5" fill="none"/><path d="M241.5 352.7l15.0 -2.7" stroke="#205cf4"/><path d="M240.6 348.9L241.5 352.7" stroke="#205cf4"/><path d="M244.5 352.2l-4 2.5l3 1.5" stroke="#205cf4" fill="none"/><path d="M240.8 356.7l14.5 -3.2" stroke="#2051f2"/><path d="M241.5 352.7L240.8 356.7" stroke="#2051f2"/><path d="M243.8 356.0l-4 2.5l3 1.5" stroke="#2051f2" fill="none"/><path d="M240.9 360.7l14.1 -3.7" stroke="#2046f1"/><path d="M240.8 356.7L240.9 360.7" stroke="#2046f1"/><path d="M243.9 359.9l-4 2.5l3 1.5" stroke="#2046f1" fill="none"/><path d="M268.0 243.0l14.0 7.7" stroke="#30aefe"/><path d="M268.9 245.2l13.5 7.2" stroke="#31b5fd"/><path d="M268.0 243.0L268.9 245.2" stroke="#31b5fd"/><path d="M268.2 247.4l13.0 6.7" stroke="#33bdfc"/><path d="M268.9 245.2L268.2 247.4" stroke="#33bdfc"/><path d="M268.3 249.7l12.4 6.2" stroke="#34c4fb"/><path d="M268.2 247.4L268.3 249.7" stroke="#34c4fb"/><path d="M269.2 252.1l14.3 6.9" stroke="#35ccfa"/><path d="M268.3 249.7L269.2 252.1" stroke="#35ccfa"/><path d="M268.6 254.4l13.8 6.3" stroke="#36d4f9"/><path d="M269.2 252.1L268.6 254.4" stroke="#36d4f9"/><path d="M268.7 256.9l13.3 5.9" stroke="#37dcf8"/><path d="M268.6 254.4L268.7 256.9" stroke="#37dcf8"/><path d="M269.6 259.3l12.8 5.4" stroke="#44e3cb"/><path d="M268.7 256.9L269.6 259.3" stroke="#44e3cb"/><path d="M268.9 261.9l14.7 5.9" stroke="#5bea77"/><path d="M269.6 259.3L268.9 261.9" stroke="#5bea77"/><path d="M269.0 264.4l14.2 5.4" stroke="#8af025"/><path d="M268.9 261.9L269.0 264.4" stroke="#8af025"/><path d="M270.0 267.0l13.7 4.9" stroke="#c3f010"/><path d="M269.0 264.4L270.0 267.0" stroke="#c3f010"/><path d="M269.3 269.7l13.2 4.5" stroke="#62ec5e"/><path d="M270.0 267.0L269.3 269.7" stroke="#62ec5e"/><path d="M269.4 272.4l15.1 4.8" stroke="#37def8"/><path d="M269.3 269.7L269.4 272.4" stroke="#37def8"/><path d="M270.4 275.2l14.6 4.3" stroke="#36d6f9"/><path d="M269.4 272.4L270.4 275.2" stroke="#36d6f9"/><path d="M269.7 278.0l14.1 3.8" stroke="#35cdfa"/><path d="M270.4 275.2L269.7 278.0" stroke="#35cdfa"/><path d="M269.8 280.9l13.6 3.4" stroke="#34c4fb"/><path d="M269.7 278.0L269.8 280.9" stroke="#34c4fb"/><path d="M270.8 283.9l15.5 3.5" stroke="#32bbfc"/><path d="M269.8 280.9L270.8 283.9" stroke="#32bbfc"/><path d="M270.1 286.8l15.0 3.0" stroke="#31b1fd"/><path d="M270.8 283.9L270.1 286.8" stroke="#31b1fd"/><path d="M270.3 289.9l14.5 2.6" stroke="#30a8fe"/><path d="M270.1 286.8L270.3 289.9" stroke="#30a8fe"/><path d="M271.2 293.0l14.0 2.2" stroke="#2b9bfc"/><path d="M270.3 289.9L271.2 293.0" stroke="#2b9bfc"/><path d="M270.6 296.2l15.9 2.0" stroke="#268ffa"/><path d="M271.2 293.0L270.6 296.2" stroke="#268ffa"/><path d="M270.8 299.4l15.5 1.6" stroke="#2082f8"/><path d="M270.6 296.2L270.8 299.4" stroke="#2082f8"/><path d="M271.7 302.7l15.0 1.1" stroke="#2078f7"/><path d="M270.8 299.4L271.7 302.7" stroke="#2078f7"/><path d="M274.7 303.0l-4 2.5l3 1.5" stroke="#2078f7" fill="none"/><path d="M271.1 306.1l14.5 0.7" stroke="#206ef6"/><path d="M271.7 302.7L271.1 306.1" stroke="#206ef6"/><path d="M274.1 306.2l-4 2.5l3 1.5" stroke="#206ef6" fill="none"/><path d="M271.2 309.5l16.4 0.4" stroke="#2064f4"/><path d="M271.1 306.1L271.2 309.5" stroke="#2064f4"/><path d="M274.2 309.6l-4 2.5l3 1.5" stroke="#2064f4" fill="none"/><path d="M272.2 313.0l16.0 -0.1" stroke="#205af3"/><path d="M271.2 309.5L272.2 313.0" stroke="#205af3"/><path d="M275.2 313.0l-4 2.5l3 1.5" stroke="#205af3" fill="none"/><path d="M271.6 316.6l15.5 -0.5" stroke="#2050f2"/><path d="M272.2 313.0L271.6 316.6" stroke="#2050f2"/><path d="M274.6 316.5l-4 2.5l3 1.5" stroke="#2050f2" fill="none"/><path d="M271.8 320.2l15.0 -0.9" stroke="#2045f1"/><path d="M271.6 316.6L271.8 320.2" stroke="#2045f1"/><path d="M274.8 320.0l-4 2.5l3 1.5" stroke="#2045f1" fill="none"/><path d="M272.7 323.9l17.0 -1.6" stroke="#203bf0"/><path d="M271.8 320.2L272.7 323.9" stroke="#203bf0"/><path d="M275.7 323.6l-4 2.5l3 1.5" stroke="#203bf0" fill="none"/><path d="M304.0 291.0l14.0 8.4" stroke="#30a8ff"/><path d="M304.9 293.2l13.5 7.8" stroke="#31b3fd"/><path d="M304.0 291.0L304.9 293.2" stroke="#31b3fd"/><path d="M304.1 295.5l13.0 7.2" stroke="#33befc"/><path d="M304.9 293.2L304.1 295.5" stroke="#33befc"/><path d="M304.2 297.8l12.5 6.7" stroke="#34cafa"/><path d="M304.1 295.5L304.2 297.8" stroke="#34cafa"/><path d="M305.0 300.1l14.5 7.3" stroke="#36d6f9"/><path d="M304.2 297.8L305.0 300.1" stroke="#36d6f9"/><path d="M304.3 302.5l14.0 6.7" stroke="#97e877"/><path d="M305.0 300.1L304.3 302.5" stroke="#97e877"/><path d="M304.4 305.0l13.5 6.2" stroke="#f0d000"/><path d="M304.3 302.5L304.4 305.0" stroke="#f0d000"/><path d="M305.2 307.5l13.0 5.6" stroke="#3fe2de"/><path d="M304.4 305.0L305.2 307.5" stroke="#3fe2de"/><path d="M304.5 310.1l15.0 6.1" stroke="#63ec5d"/><path d="M305.2 307.5L304.5 310.1" stroke="#63ec5d"/><path d="M304.6 312.7l14.5 5.5" stroke="#70f030"/><path d="M304.5 310.1L304.6 312.7" stroke="#70f030"/><path d="M305.4 315.4l14.1 4.9" stroke="#37dcf8"/><path d="M304.6 312.7L305.4 315.4" stroke="#37dcf8"/><path d="M304.7 318.2l13.6 4.4" stroke="#36d6f9"/><path d="M305.4 315.4L304.7 318.2" stroke="#36d6f9"/><path d="M304.8 321.0l15.5 4.5" stroke="#35cffa"/><path d="M304.7 318.2L304.8 321.0" stroke="#35cffa"/><path d="M305.6 323.9l15.1 4.0" stroke="#34c8fa"/><path d="M304.8 321.0L305.6 323.9" stroke="#34c8fa"/><path d="M304.9 326.9l14.6 3.4" stroke="#33c1fb"/><path d="M305.6 323.9L304.9 326.9" stroke="#33c1fb"/><path d="M305.0 329.9l14.2 2.9" stroke="#32bafc"/><path d="M304.9 326.9L305.0 329.9" stroke="#32bafc"/><path d="M305.9 333.0l16.2 2.7" stroke="#31b3fd"/><path d="M305.0 329.9L305.9 333.0" stroke="#31b3fd"/><path d="M305.2 336.2l15.7 2.1" stroke="#30acfe"/><path d="M305.9 333.0L305.2 336.2" stroke="#30acfe"/><path d="M305.2 339.4l15.3 1.6" stroke="#2da0fd"/><path d="M305.2 336.2L305.2 339.4" stroke="#2da0fd"/><path d="M306.1 342.7l14.9 1.0" stroke="#2690fa"/><path d="M305.2 339.4L306.1 342.7" stroke="#2690fa"/><path d="M305.4 346.1l16.8 0.6" stroke="#207ff7"/><path d="M306.1 342.7L305.4 346.1" stroke="#207ff7"/><path d="M308.4 346.2l-4 2.5l3 1.5" stroke="#207ff7" fill="none"/><path d="M305.5 349.6l16.4 -0.0" stroke="#2074f6"/><path d="M305.4 346.1L305.5 349.6" stroke="#2074f6"/><path d="M308.5 349.6l-4 2.5l3 1.5" stroke="#2074f6" fill="none"/><path d="M306.4 353.1l16.0 -0.6" stroke="#2069f5"/><path d="M305.5 349.6L306.4 353.1" stroke="#2069f5"/><path d="M309.4 353.0l-4 2.5l3 1.5" stroke="#2069f5" fill="none"/><path d="M305.7 356.8l15.6 -1.2" stroke="#205ef4"/><path d="M306.4 353.1L305.7 356.8" stroke="#205ef4"/><path d="M308.7 356.5l-4 2.5l3 1.5" stroke="#205ef4" fill="none"/><path d="M305.8 360.5l17.6 -2.0" stroke="#2052f2"/><path d="M305.7 356.8L305.8 360.5" stroke="#2052f2"/><path d="M308.8 360.1l-4 2.5l3 1.5" stroke="#2052f2" fill="none"/><path d="M306.7 364.3l17.2 -2.6" stroke="#2046f1"/><path d="M305.8 360.5L306.7 364.3" stroke="#2046f1"/><path d="M309.7 363.8l-4 2.5l3 1.5" stroke="#2046f1" fill="none"/><path d="M306.0 368.2l16.8 -3.2" stroke="#203af0"/><path d="M306.7 364.3L306.0 368.2" stroke="#203af0"/><path d="M309.0 367.6l-4 2.5l3 1.5" stroke="#203af0" fill="none"/></g></svg>
<div class="t" style="left:137px;top:441.8px;font:10px 'Liberation Mono', monospace;letter-spacing:0.12px;color:#f400f4">Winds - 3D View 2006-11-04 15:00:00Z</div></body></html>
